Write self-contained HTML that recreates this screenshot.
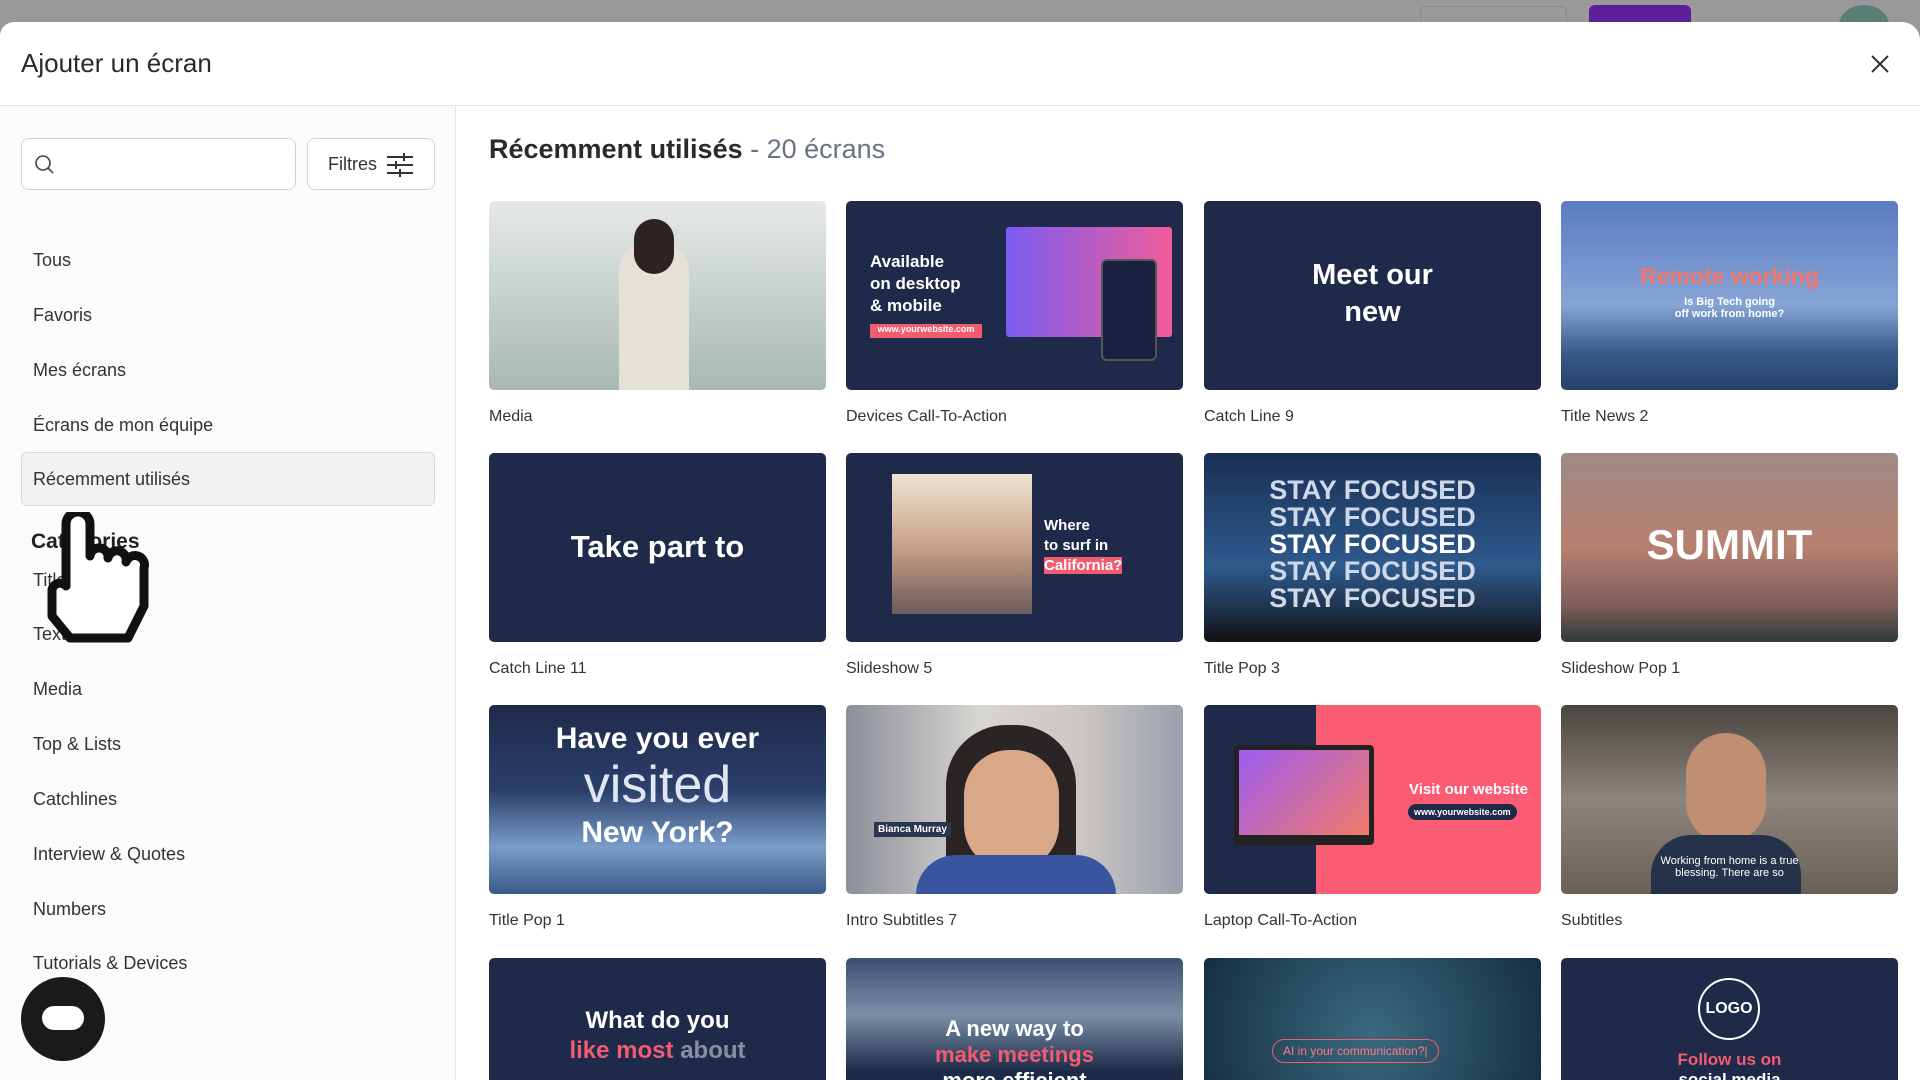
<!DOCTYPE html>
<html><head><meta charset="utf-8"><style>
*{margin:0;padding:0;box-sizing:border-box}
body{width:1920px;height:1080px;overflow:hidden;background:#999;font-family:"Liberation Sans",sans-serif;color:#222;position:relative}
.modal{position:absolute;left:0;top:22px;width:1920px;height:1058px;background:#fff;border-radius:14px 18px 0 0;overflow:hidden}
.title{position:absolute;left:21px;top:26px;font-size:26px;color:#2a2a2a}
.close{position:absolute;right:30px;top:32px}
.hsep{position:absolute;left:0;right:0;top:83px;border-top:1px solid #e4e4e4}
.side{position:absolute;left:0;top:84px;width:456px;bottom:0;background:#fbfbfb;border-right:1px solid #e6e6e6}
.search{position:absolute;left:21px;width:275px;height:52px;border:1px solid #d4d4d4;border-radius:8px;background:#fff}
.filt{position:absolute;left:307px;width:128px;height:52px;border:1px solid #d4d4d4;border-radius:8px;background:#fff;font-size:18px;color:#333;padding:15px 0 0 20px}
.nav{position:absolute;left:33px;font-size:18px;color:#333}
.sel{position:absolute;left:21px;width:414px;height:54px;background:#f2f2f2;border:1px solid #d8d8d8;border-radius:6px}
.cat{position:absolute;left:31px;font-size:21px;font-weight:bold;color:#222}
.heading{position:absolute;left:489px;top:112px;font-size:27px;font-weight:bold;color:#2a2a2a}
.heading span{color:#6b7283;font-weight:normal}
.card{position:absolute;width:337px;height:189px;border-radius:5px;overflow:hidden;background:#1f2a4a;color:#fff;font-weight:bold;text-align:center}
.lbl{position:absolute;font-size:16px;color:#333}
.chat{position:absolute;left:21px;width:84px;height:84px;border-radius:50%;background:#1a1a1a}
</style></head><body>
<div style="position:absolute;left:1420px;top:6px;width:147px;height:30px;border:1px solid #888;border-radius:6px"></div>
<div style="position:absolute;left:1589px;top:5px;width:102px;height:30px;background:#5b1f9c;border-radius:6px"></div>
<div style="position:absolute;left:1839px;top:5px;width:50px;height:40px;background:#5b7d78;border-radius:50%"></div>
<div class="modal">
<div class="title">Ajouter un écran</div>
<svg class="close" width="20" height="20" viewBox="0 0 20 20"><path d="M2 2L18 18M18 2L2 18" stroke="#333" stroke-width="2"/></svg>
<div class="hsep"></div>
<div class="side">
<div class="search" style="top:32px"><svg style="position:absolute;left:12px;top:15px" width="22" height="22" viewBox="0 0 22 22"><circle cx="9" cy="9" r="7" fill="none" stroke="#444" stroke-width="1.6"/><path d="M14 14L19 19" stroke="#444" stroke-width="1.6"/></svg></div>
<div class="filt" style="top:32px">Filtres<svg style="position:absolute;left:78px;top:14px" width="28" height="24" viewBox="0 0 28 24"><path d="M1 4H27M1 12H27M1 20H27M18 0V8M10 8V16M14 16V24" stroke="#333" stroke-width="2"/></svg></div>
<div class="sel" style="top:346px"></div>
<div class="nav" style="top:144px">Tous</div>
<div class="nav" style="top:199px">Favoris</div>
<div class="nav" style="top:254px">Mes écrans</div>
<div class="nav" style="top:309px">Écrans de mon équipe</div>
<div class="nav" style="top:363px">Récemment utilisés</div>
<div class="cat" style="top:424px">Catégories</div>
<div class="nav" style="top:464px">Titles</div>
<div class="nav" style="top:518px">Text</div>
<div class="nav" style="top:573px">Media</div>
<div class="nav" style="top:628px">Top &amp; Lists</div>
<div class="nav" style="top:683px">Catchlines</div>
<div class="nav" style="top:738px">Interview &amp; Quotes</div>
<div class="nav" style="top:793px">Numbers</div>
<div class="nav" style="top:847px">Tutorials &amp; Devices</div>
</div>
<svg style="position:absolute;left:42px;top:490px" width="110" height="138" viewBox="0 0 110 138"><path d="M24 72V12a12 12 0 0 1 24 0V44a9 9 0 0 1 18 2a9 9 0 0 1 18 4a9 9 0 0 1 18 6V94l-16 32H28L10 104V78a8 8 0 0 1 14-4z" fill="#fff" stroke="#111" stroke-width="9" stroke-linejoin="round"/></svg>
<div class="chat" style="top:955px"><div style="position:absolute;left:21px;top:29px;width:42px;height:24px;background:#fff;border-radius:12px"></div></div>

<div class="heading">Récemment utilisés <span>- 20 écrans</span></div>

<div class="card" style="left:489px;top:179px;background:linear-gradient(180deg,#e6e8e8 0%,#cdd6d3 40%,#a8b8b2 100%)"><div style="position:absolute;left:130px;top:40px;width:70px;height:150px;background:#e6e0da;border-radius:30px 30px 0 0"></div><div style="position:absolute;left:145px;top:18px;width:40px;height:55px;background:#2d2422;border-radius:20px"></div></div>
<div class="lbl" style="left:489px;top:386px">Media</div>
<div class="card" style="left:846px;top:179px"><div style="position:absolute;left:24px;top:50px;text-align:left;font-size:17px;line-height:22px">Available<br>on desktop<br>&amp; mobile</div><div style="position:absolute;left:24px;top:123px;width:112px;height:14px;background:#f25c70;font-size:9px">www.yourwebsite.com</div><div style="position:absolute;left:160px;top:26px;width:166px;height:110px;background:linear-gradient(90deg,#7a5cf0,#f25c9a);border-radius:3px"></div><div style="position:absolute;left:255px;top:58px;width:56px;height:102px;background:#1a2040;border:2px solid #555;border-radius:6px"></div></div>
<div class="lbl" style="left:846px;top:386px">Devices Call-To-Action</div>
<div class="card" style="left:1204px;top:179px;font-size:29px;line-height:37px;padding-top:56px">Meet our<br>new</div>
<div class="lbl" style="left:1204px;top:386px">Catch Line 9</div>
<div class="card" style="left:1561px;top:179px;background:linear-gradient(180deg,#5a7bbf 0%,#87a4d6 55%,#3a5a8a 80%,#25406a 100%)"><div style="padding-top:62px;font-size:23px;color:#f3766c">Remote working</div><div style="font-size:11px;margin-top:6px">Is Big Tech going<br>off work from home?</div></div>
<div class="lbl" style="left:1561px;top:386px">Title News 2</div>

<div class="card" style="left:489px;top:431px;font-size:31px;padding-top:76px">Take part to</div>
<div class="lbl" style="left:489px;top:638px">Catch Line 11</div>
<div class="card" style="left:846px;top:431px"><div style="position:absolute;left:46px;top:21px;width:140px;height:140px;background:linear-gradient(180deg,#efe4d2,#c9a58a 50%,#6d5a5a)"></div><div style="position:absolute;left:198px;top:63px;text-align:left;font-size:15px;line-height:20px">Where<br>to surf in<br><span style="background:#f25c70">California?</span></div></div>
<div class="lbl" style="left:846px;top:638px">Slideshow 5</div>
<div class="card" style="left:1204px;top:431px;background:linear-gradient(180deg,#1a2f55 0%,#2e5a8c 60%,#1d2d44 85%,#111 100%);font-size:27px;line-height:27px;padding-top:24px;color:#cfd8e8">STAY FOCUSED<br>STAY FOCUSED<br><span style="color:#fff">STAY FOCUSED</span><br>STAY FOCUSED<br>STAY FOCUSED</div>
<div class="lbl" style="left:1204px;top:638px">Title Pop 3</div>
<div class="card" style="left:1561px;top:431px;background:linear-gradient(180deg,#9e8a86 0%,#b88070 50%,#7e5f5c 80%,#2e3b3a 100%);font-size:42px;padding-top:68px">SUMMIT</div>
<div class="lbl" style="left:1561px;top:638px">Slideshow Pop 1</div>

<div class="card" style="left:489px;top:683px;background:linear-gradient(180deg,#1f2a4a 0%,#2a3f6a 45%,#7a9cc8 75%,#3a5a88 100%);font-size:30px;line-height:40px;padding-top:14px">Have you ever<br><span style="font-size:52px;font-weight:normal;color:#dfe7f5;line-height:52px">visited</span><br>New York?</div>
<div class="lbl" style="left:489px;top:890px">Title Pop 1</div>
<div class="card" style="left:846px;top:683px;background:linear-gradient(90deg,#8c8f99,#d8d6d2 40%,#cbc6c2 70%,#9aa0ad)"><div style="position:absolute;left:100px;top:20px;width:130px;height:170px;background:#2a2424;border-radius:60px 60px 0 0"></div><div style="position:absolute;left:118px;top:45px;width:95px;height:120px;background:#d8a889;border-radius:45px"></div><div style="position:absolute;left:70px;top:150px;width:200px;height:40px;background:#3a55a0;border-radius:40px 40px 0 0"></div><div style="position:absolute;left:28px;top:117px;background:#2a3550;font-size:10px;padding:2px 4px">Bianca Murray</div></div>
<div class="lbl" style="left:846px;top:890px">Intro Subtitles 7</div>
<div class="card" style="left:1204px;top:683px;background:linear-gradient(90deg,#1f2a4a 0 112px,#fa5c74 112px)"><div style="position:absolute;left:30px;top:40px;width:140px;height:100px;background:#222;border-radius:4px"></div><div style="position:absolute;left:35px;top:45px;width:130px;height:85px;background:linear-gradient(135deg,#9c5cf0,#f27a6a)"></div><div style="position:absolute;left:205px;top:76px;font-size:15px">Visit our website</div><div style="position:absolute;left:204px;top:99px;background:#1f2a4a;border-radius:8px;font-size:9px;padding:3px 6px">www.yourwebsite.com</div></div>
<div class="lbl" style="left:1204px;top:890px">Laptop Call-To-Action</div>
<div class="card" style="left:1561px;top:683px;background:linear-gradient(180deg,#4a4540,#8c857c 50%,#6a6058)"><div style="position:absolute;left:125px;top:28px;width:80px;height:110px;background:#c08e72;border-radius:40px"></div><div style="position:absolute;left:90px;top:130px;width:150px;height:60px;background:#26324a;border-radius:40px 40px 0 0"></div><div style="position:absolute;left:0;right:0;top:150px;font-size:11px;font-weight:normal">Working from home is a true<br>blessing. There are so</div></div>
<div class="lbl" style="left:1561px;top:890px">Subtitles</div>

<div class="card" style="left:489px;top:936px;font-size:24px;line-height:30px;padding-top:48px">What do you<br><span style="color:#f25c70">like most <span style="color:#8a8fa0">about</span></span></div>
<div class="card" style="left:846px;top:936px;background:linear-gradient(180deg,#3a5070,#7a90a8 30%,#1c2a48 60%);font-size:22px;line-height:26px;padding-top:58px">A new way to<br><span style="color:#f25c70">make meetings</span><br>more efficient</div>
<div class="card" style="left:1204px;top:936px;background:radial-gradient(circle at 50% 40%,#3a6a80,#12283a)"><div style="position:absolute;left:68px;top:81px;border:1px solid #f25c70;border-radius:14px;font-size:12px;font-weight:normal;padding:4px 10px;color:#f78">AI in your communication?|</div></div>
<div class="card" style="left:1561px;top:936px"><div style="position:absolute;left:137px;top:20px;width:62px;height:62px;border:2px solid #fff;border-radius:50%;font-size:16px;padding-top:20px">LOGO</div><div style="position:absolute;left:0;right:0;top:92px;font-size:17px;line-height:20px"><span style="color:#f25c70">Follow us on</span><br>social media</div></div>
</div>
</body></html>
